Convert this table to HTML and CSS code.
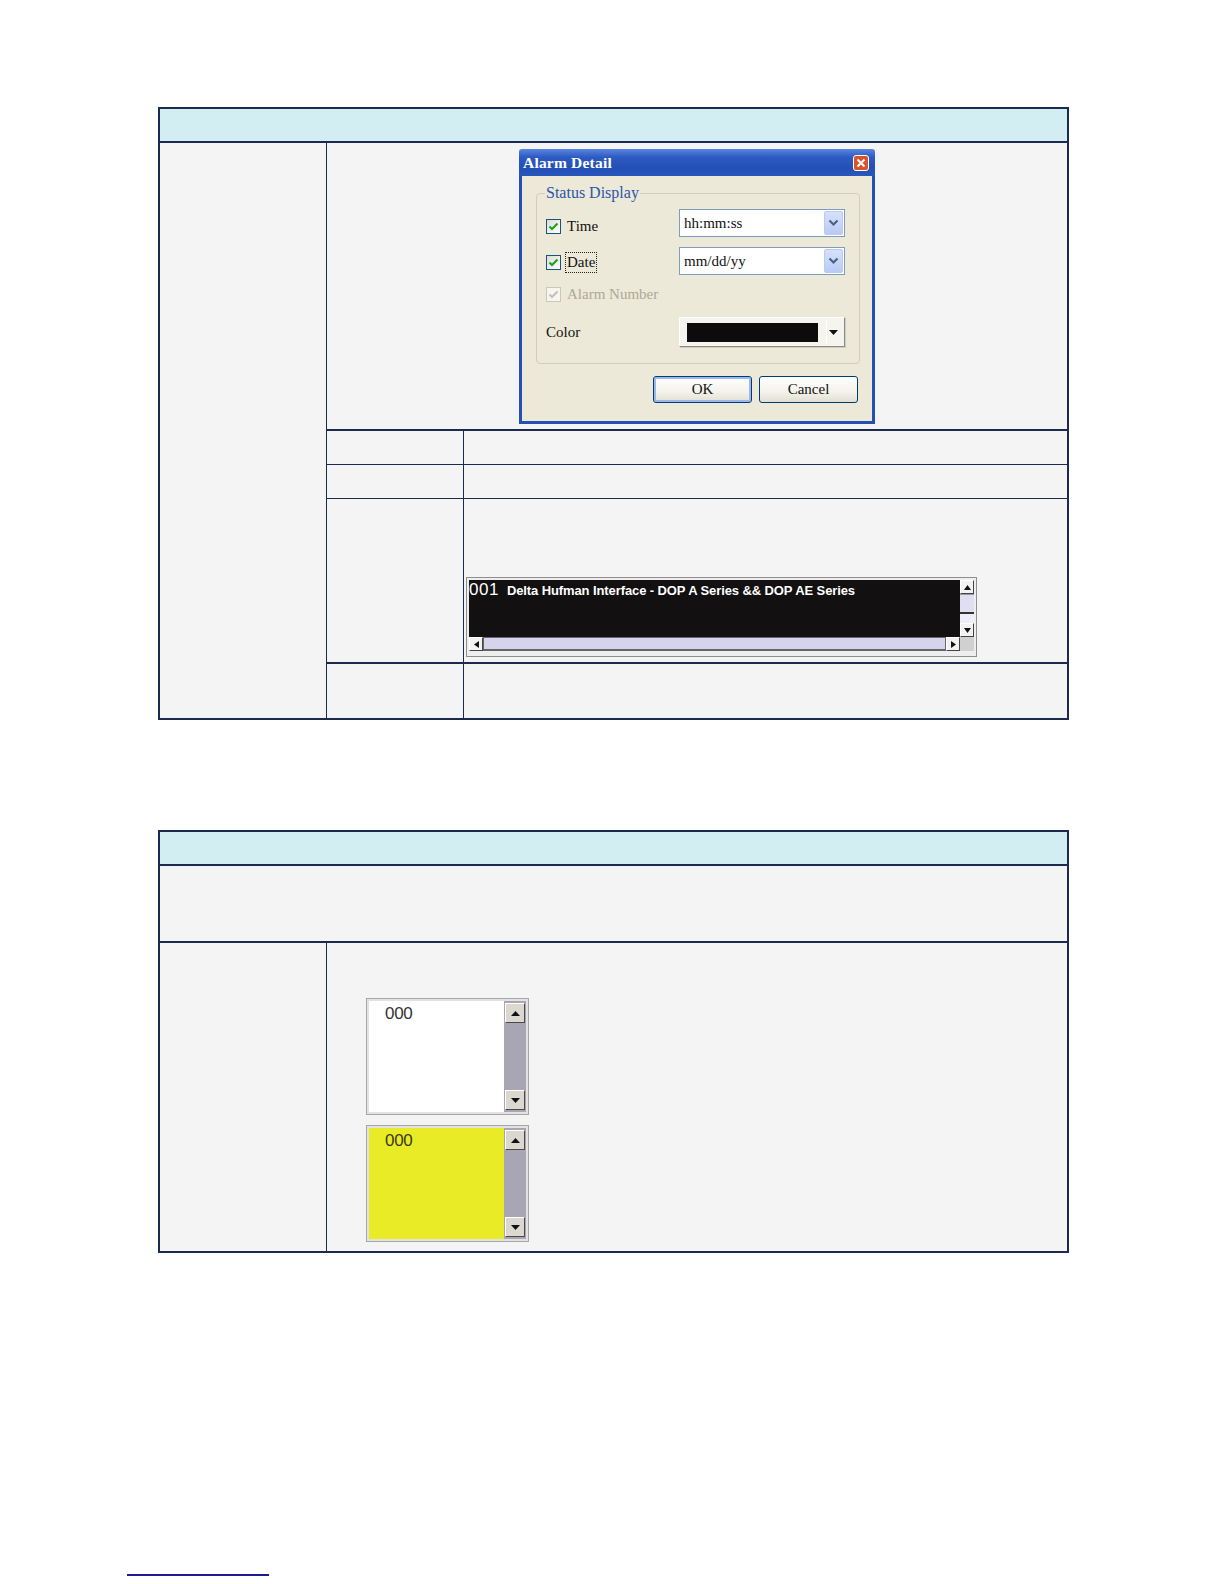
FILE: index.html
```html
<!DOCTYPE html>
<html>
<head>
<meta charset="utf-8">
<title>Alarm Detail</title>
<link rel="stylesheet" href="styles.css">
</head>
<body>
<div class="page">
  <div class="tbl t1">
    <div class="hd"></div>
    <div class="body">
      <div class="c1"></div>
      <div class="right">
        <div class="imgrow">
          <div class="dlg">
            <div class="tb">
              <span class="tb-title">Alarm Detail</span>
              <span class="close"><svg width="16" height="16" viewBox="0 0 16 16"><rect x="0.5" y="0.5" width="15" height="15" rx="2.5" fill="#d9542c" stroke="#fff"/><path d="M4.5 4.5 L11.5 11.5 M11.5 4.5 L4.5 11.5" stroke="#fff" stroke-width="2"/></svg></span>
            </div>
            <div class="dbody">
              <fieldset class="grp">
                <legend>Status Display</legend>
                <div class="frow r-time">
                  <div class="lab"><span class="cb"><svg width="13" height="13" viewBox="0 0 13 13"><polyline points="2.5,6.5 5,9 10.5,3.5" fill="none" stroke="#21a121" stroke-width="2.2"/></svg></span><span>Time</span></div>
                  <div class="combo"><span class="ctext">hh:mm:ss</span><span class="dd"><svg width="11" height="8" viewBox="0 0 11 8"><polyline points="1.5,1.5 5.5,5.5 9.5,1.5" fill="none" stroke="#4d6185" stroke-width="2.2"/></svg></span></div>
                </div>
                <div class="frow r-date">
                  <div class="lab"><span class="cb"><svg width="13" height="13" viewBox="0 0 13 13"><polyline points="2.5,6.5 5,9 10.5,3.5" fill="none" stroke="#21a121" stroke-width="2.2"/></svg></span><span class="focus">Date</span></div>
                  <div class="combo"><span class="ctext">mm/dd/yy</span><span class="dd"><svg width="11" height="8" viewBox="0 0 11 8"><polyline points="1.5,1.5 5.5,5.5 9.5,1.5" fill="none" stroke="#4d6185" stroke-width="2.2"/></svg></span></div>
                </div>
                <div class="frow r-alarm">
                  <div class="lab dis"><span class="cb"><svg width="13" height="13" viewBox="0 0 13 13"><polyline points="2.5,6.5 5,9 10.5,3.5" fill="none" stroke="#c4c2b4" stroke-width="2.2"/></svg></span><span>Alarm Number</span></div>
                </div>
                <div class="frow r-color">
                  <div class="lab"><span>Color</span></div>
                  <div class="cpick"><span class="swatch"></span><span class="sep"></span><span class="tri"><svg width="9" height="5" viewBox="0 0 9 5"><polygon points="0,0 9,0 4.5,5" fill="#111"/></svg></span></div>
                </div>
              </fieldset>
              <div class="btns">
                <span class="btn ok">OK</span>
                <span class="btn">Cancel</span>
              </div>
            </div>
          </div>
        </div>
        <div class="row r2"><div class="ca"></div><div class="cbx"></div></div>
        <div class="row r3"><div class="ca"></div><div class="cbx"></div></div>
        <div class="row r4">
          <div class="ca"></div>
          <div class="cbx logcell">
            <div class="log">
              <div class="log-top">
                <div class="log-text"><span class="num">001</span><span class="msg">Delta Hufman Interface - DOP A Series &amp;&amp; DOP AE Series</span></div>
                <div class="vsb">
                  <span class="sbtn"><svg width="7" height="5" viewBox="0 0 7 5"><polygon points="3.5,0 7,5 0,5" fill="#111"/></svg></span>
                  <span class="vthumb"></span>
                  <span class="vtrack"></span>
                  <span class="sbtn"><svg width="7" height="5" viewBox="0 0 7 5"><polygon points="0,0 7,0 3.5,5" fill="#111"/></svg></span>
                </div>
              </div>
              <div class="hsb">
                <span class="sbtn"><svg width="5" height="7" viewBox="0 0 5 7"><polygon points="0,3.5 5,0 5,7" fill="#111"/></svg></span>
                <span class="hthumb"></span>
                <span class="sbtn"><svg width="5" height="7" viewBox="0 0 5 7"><polygon points="0,0 5,3.5 0,7" fill="#111"/></svg></span>
                <span class="corner"></span>
              </div>
            </div>
          </div>
        </div>
        <div class="row r5"><div class="ca"></div><div class="cbx"></div></div>
      </div>
    </div>
  </div>

  <div class="tbl t2">
    <div class="hd"></div>
    <div class="desc"></div>
    <div class="body">
      <div class="c1"></div>
      <div class="c2">
        <div class="lb">
          <div class="lb-area"><span class="lb-num">000</span></div>
          <div class="lb-sb">
            <span class="lbtn"><svg width="9" height="5" viewBox="0 0 9 5"><polygon points="4.5,0 9,5 0,5" fill="#111"/></svg></span>
            <span class="lbtn"><svg width="9" height="5" viewBox="0 0 9 5"><polygon points="0,0 9,0 4.5,5" fill="#111"/></svg></span>
          </div>
        </div>
        <div class="lb yellow">
          <div class="lb-area"><span class="lb-num">000</span></div>
          <div class="lb-sb">
            <span class="lbtn"><svg width="9" height="5" viewBox="0 0 9 5"><polygon points="4.5,0 9,5 0,5" fill="#111"/></svg></span>
            <span class="lbtn"><svg width="9" height="5" viewBox="0 0 9 5"><polygon points="0,0 9,0 4.5,5" fill="#111"/></svg></span>
          </div>
        </div>
      </div>
    </div>
  </div>

  <div class="footrule"></div>
</div>
</body>
</html>
```

FILE: styles.css
```css
* { box-sizing: border-box; }
html, body { margin: 0; padding: 0; background: #ffffff; }
body { font-family: "Liberation Serif", "DejaVu Serif", serif; }

.page { padding-top: 107px; }

.tbl {
  margin-left: 158px;
  width: 911px;
  border: 2px solid #1d2a4f;
  background: #f4f4f4;
}
.hd {
  height: 34px;
  background: #d3eef2;
  border-bottom: 2px solid #1d2a4f;
}

/* table 1 */
.t1 .body { display: flex; height: 575px; }
.c1 { width: 167px; border-right: 1px solid #1d2a4f; flex: none; }
.right { flex: 1; display: flex; flex-direction: column; }
.imgrow {
  height: 288px;
  border-bottom: 2px solid #1d2a4f;
  display: flex;
  justify-content: center;
  padding-top: 6px;
}
.row { display: flex; border-bottom: 1px solid #1d2a4f; }
.ca { width: 137px; border-right: 1px solid #1d2a4f; flex: none; }
.cbx { flex: 1; }
.r2 { height: 34px; }
.r3 { height: 34px; }
.r4 { height: 165px; border-bottom-width: 2px; }
.r5 { height: 54px; border-bottom: none; }

/* dialog */
.dlg {
  width: 356px;
  height: 275px;
  display: flex;
  flex-direction: column;
  background: #ece9d8;
  font-size: 15px;
  color: #111;
}
.tb {
  height: 27px;
  flex: none;
  background: linear-gradient(#5a86e0, #2d5bc2 30%, #2350b4 70%, #2856bc);
  border-radius: 3px 3px 0 0;
  display: flex;
  align-items: center;
  justify-content: space-between;
  padding: 1px 6px 0 4px;
}
.tb-title { color: #fff; font-weight: bold; font-size: 15.5px; letter-spacing: 0.2px; }
.close { display: flex; }
.dbody {
  flex: 1;
  border: 3px solid #2350b4;
  border-top: none;
  padding: 9px 12px 0 14px;
}
.grp {
  margin: 0;
  border: 1px solid #d0cfbf;
  border-radius: 4px;
  padding: 8px 9px 16px 9px;
  min-width: 0;
}
.grp legend {
  padding: 0 1px;
  margin-left: -1px;
  font-size: 16px;
  line-height: 16px;
  color: #2c55a9;
}
.frow { display: flex; align-items: center; height: 28px; }
.r-time .lab { padding-top: 6px; }
.r-date { margin-top: 10px; }
.r-date .lab { padding-top: 2px; }
.r-alarm { margin-top: 4px; height: 30px; }
.r-color { margin-top: 8px; height: 30px; }
.lab { width: 133px; display: flex; align-items: center; gap: 6px; flex: none; }
.lab.dis { color: #aca899; }
.cb {
  width: 15px; height: 15px;
  border: 1px solid #1c5180;
  background: linear-gradient(135deg, #dcdcd5, #ffffff);
  display: flex; align-items: center; justify-content: center;
}
.dis .cb { border-color: #cac8bb; background: #f6f5ef; }
.focus { outline: 1px dotted #222; outline-offset: 1px; }
.combo {
  width: 166px; height: 28px;
  border: 1px solid #7f9db9;
  background: #fff;
  display: flex; align-items: center; justify-content: space-between;
  padding: 1px;
}
.ctext { padding-left: 3px; }
.dd {
  width: 19px; height: 24px;
  border: 1px solid #b8cbf5;
  border-radius: 2px;
  background: linear-gradient(#d6e0fb, #b9cbf3);
  display: flex; align-items: center; justify-content: center;
}
.cpick {
  width: 166px; height: 30px;
  border: 1px solid;
  border-color: #ffffff #8c8c84 #8c8c84 #ffffff;
  box-shadow: 1px 1px 0 #cfcdc0;
  background: #f5f4ef;
  display: flex; align-items: center;
  padding: 0 4px 0 7px;
}
.swatch { width: 131px; height: 19px; background: #0d0b0b; }
.sep { width: 1px; height: 22px; background: #c8c6bb; margin-left: 8px; border-right: 1px solid #fff; }
.tri { flex: 1; display: flex; justify-content: center; }
.btns { display: flex; justify-content: flex-end; gap: 7px; margin-top: 12px; padding-right: 2px; }
.btn {
  width: 99px; height: 27px;
  border: 1px solid #003c74;
  border-radius: 3px;
  background: linear-gradient(#ffffff, #f3f2ec 60%, #e2dfd3);
  display: flex; align-items: center; justify-content: center;
  font-size: 15px;
}
.btn.ok { box-shadow: inset 0 0 0 2px #9db8ec; }

/* log window */
.logcell { padding: 78px 0 0 2px; }
.log {
  width: 511px; height: 80px;
  border: 1px solid #8e8e8e;
  background: #eeeeee;
  padding: 2px 2px 5px 2px;
  display: flex; flex-direction: column;
}
.log-top { display: flex; height: 57px; background: #121010; }
.log-text {
  flex: 1; overflow: hidden; white-space: nowrap;
  color: #fff; display: flex; align-items: baseline;
  padding-top: 0;
}
.num {
  font-family: "Liberation Sans", "DejaVu Sans", sans-serif;
  font-size: 17px; font-weight: 300; letter-spacing: 0.5px;
}
.msg {
  font-family: "Liberation Sans Narrow", "Liberation Sans", sans-serif;
  font-weight: bold; font-size: 13px; letter-spacing: -0.1px; margin-left: 8px;
}
.vsb { width: 14px; display: flex; flex-direction: column; background: #e8e8f4; }
.sbtn {
  width: 14px; height: 14px; flex: none;
  background: #f2f2f2;
  border: 1px solid; border-color: #fff #444 #444 #fff;
  display: flex; align-items: center; justify-content: center;
}
.vthumb { height: 20px; background: #e0dff2; border-bottom: 2px solid #333; border-top: 1px solid #999; }
.vtrack { flex: 1; background: #eeeef6; }
.hsb { display: flex; height: 14px; background: #fff; }
.hthumb { flex: 1; background: #d6d3ec; border: 1px solid #666; border-bottom-width: 2px; }
.corner { width: 14px; background: #d0d0d0; }

/* table 2 */
.t2 { margin-top: 110px; }
.desc { height: 77px; border-bottom: 2px solid #1d2a4f; }
.t2 .body { display: flex; height: 308px; }
.c2 { flex: 1; padding: 55px 0 0 39px; display: flex; flex-direction: column; gap: 10px; }
.lb {
  width: 163px; height: 117px;
  border: 1px solid #a6a6a6;
  background: #e2e2e2;
  padding: 2px;
  display: flex;
}
.lb-area { flex: 1; background: #ffffff; padding: 4px 0 0 16px; }
.lb.yellow .lb-area { background: #e8eb25; }
.lb-num {
  font-family: "Liberation Sans Narrow", "Liberation Sans", sans-serif;
  font-size: 17px; line-height: 1; color: #333; letter-spacing: -0.3px;
}
.yellow .lb-num { color: #3b3b12; }
.lb-sb {
  width: 22px; background: #a8a5b5;
  display: flex; flex-direction: column; justify-content: space-between;
  padding: 2px 1px 2px 1px;
}
.lbtn {
  width: 20px; height: 20px;
  background: #dcd8d0;
  border: 1px solid; border-color: #ffffff #4a4a4a #4a4a4a #ffffff;
  display: flex; align-items: center; justify-content: center;
}

.footrule { margin: 321px 0 0 127px; width: 142px; height: 2px; background: #1b1b8c; }
```
